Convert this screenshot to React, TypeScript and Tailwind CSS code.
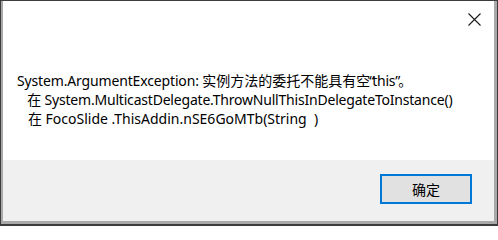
import React from "react";

const App = () => {
	return (
		<div className="w-[498px] h-[226px] bg-[#3c3c3c] pt-[1px] pl-[1px] pr-[1px] pb-[2px]">
			<div className="h-full flex flex-col border-l-[2px] border-r-[3px] border-b-[3px] border-[#a9a9a9] font-['Noto_Sans','Noto_Sans_CJK_SC',sans-serif]">
				<div className="h-[159px] bg-white flex flex-col">
					<div className="flex justify-end pt-[12px] pr-[13px]">
						<svg width="13" height="13" viewBox="0 0 13 13">
							<path d="M0.5 0.5 L12.5 12.5 M12.5 0.5 L0.5 12.5" stroke="#1a1a1a" strokeWidth="1.1" />
						</svg>
					</div>
					<div className="pt-[45px] pl-[14px] text-[14px] leading-[19px] text-black whitespace-pre">
						<div>
							<span className="tracking-[-0.15px]">System.ArgumentException: </span>
							<span>实例方法的委托不能具有空</span>
							<span className="tracking-[-2px] -ml-[1px]">“</span>
							<span className="tracking-[-0.3px]">this</span>
							<span className="tracking-[-2px]">”</span>
							<span>。</span>
						</div>
						<div className="tracking-[-0.2px]">   在 System.MulticastDelegate.ThrowNullThisInDelegateToInstance()</div>
						<div>   在 FocoSlide .ThisAddin.nSE6GoMTb(String  )</div>
					</div>
				</div>
				<div className="flex-1 bg-[#f0f0f0] flex justify-end items-start pt-[14px] pr-[22px]">
					<button className="w-[92px] h-[30px] bg-[#e1e1e1] border-[2px] border-[#0078d7] text-[14px] text-black flex items-center justify-center">
						确定
					</button>
				</div>
			</div>
		</div>
	);
};

export default App;
